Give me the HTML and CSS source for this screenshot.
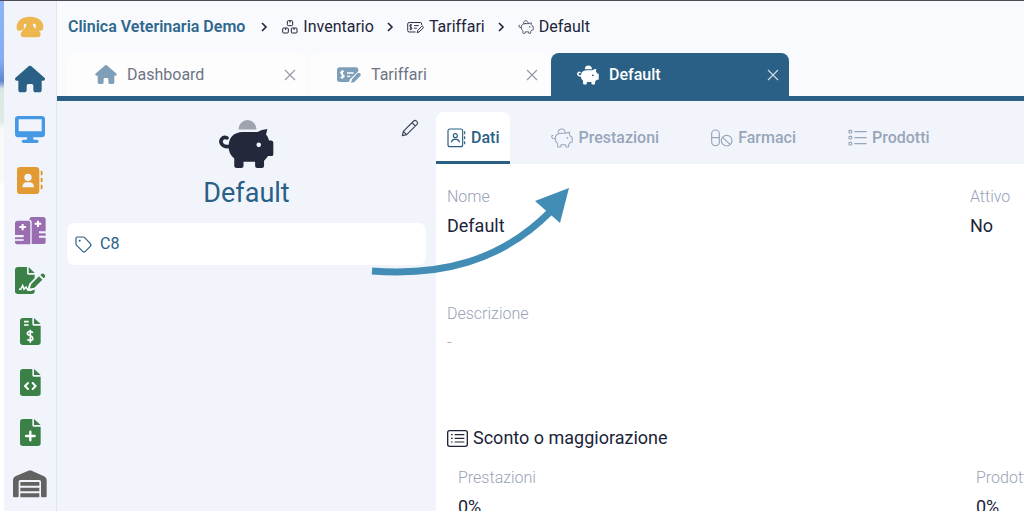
FILE: index.html
```html
<!DOCTYPE html>
<html lang="it">
<head>
<meta charset="utf-8">
<title>Clinica Veterinaria Demo</title>
<link rel="stylesheet" href="styles.css">
</head>
<body>
<svg class="sprite" aria-hidden="true">
  <symbol id="house" viewBox="0 0 576 512"><path fill="currentColor" d="M575.8 255.5c0 18-15 32.1-32 32.1h-32l.7 160.2c0 2.700-.2 5.400-.5 8.100V472c0 22.100-17.900 40-40 40H392c-22.100 0-40-17.900-40-40V384c0-17.700-14.300-32-32-32H256c-17.700 0-32 14.300-32 32v88c0 22.100-17.900 40-40 40H104c-22.100 0-40-17.900-40-40V287.600H32c-18 0-32-14-32-32.100 0-9 3-17 10-24L266.400 8c7-7 15-8 22-8s15 2 21 7L564.800 231.500c8 7 12 15 11 24z"/></symbol>
  <symbol id="pig" viewBox="88 40 166 149">
    <path d="M147 71a27 29 0 0 1 54 0z" fill="currentColor" class="coin"/>
    <path d="M112 96C99 90 90 104 96 114Q102 124 120 122" fill="none" stroke="currentColor" stroke-width="11" stroke-linecap="round"/>
    <path fill="currentColor" fill-rule="evenodd" d="M160 78H204Q216 70 234 69L230 86Q236 92 239 104H246Q252 105 252 111V146Q252 151 246 151H236Q230 160 224 165V181Q224 187 217 187H203Q197 187 197 181V168H162V181Q162 187 155 187H141Q134 187 134 181V158Q117 146 117 122Q117 80 160 78ZM208 110a7 7 0 1 0 0 14a7 7 0 1 0 0-14Z"/>
  </symbol>
  <symbol id="pig-line" viewBox="84 38 172 155">
    <g fill="none" stroke="currentColor" stroke-width="8" stroke-linejoin="round" stroke-linecap="round">
      <path d="M140 74C142 36 192 36 196 74M100 96C86 94 86 112 98 118Q104 122 117 121"/>
      <path d="M160 78H202Q214 70 230 70L227 88Q235 95 238 106H244Q250 107 250 112V144Q250 149 244 149H236Q230 160 222 165V181Q222 186 215 186H205Q199 186 199 181V169H162V181Q162 186 155 186H143Q136 186 136 181V158Q117 146 117 122Q117 80 160 78Z"/>
    </g><circle cx="212" cy="115" r="7" fill="currentColor"/>
  </symbol>
  <symbol id="check" viewBox="0 0 72 54">
    <path fill="currentColor" d="M8 4H56Q64 4 64 12V16L39 40L36 48H8Q0 48 0 40V12Q0 4 8 4ZM61 22Q65 18 69 22T70 30L52 48L42 51L45 40Z"/>
    <g fill="none" stroke="#fff" stroke-width="4"><path d="M21 17Q17 14 13 17T14 24L19 27Q23 31 19 34T11 33M16 12V38M30 21H50M30 31H40"/></g>
  </symbol>
  <symbol id="check-line" viewBox="0 0 72 54">
    <g fill="none" stroke="currentColor" stroke-width="4" stroke-linejoin="round"><path d="M36 46H9Q3 46 3 40V12Q3 6 9 6H56Q62 6 62 12V16M62 22Q66 19 68 23T68 30L51 46L43 49L46 39ZM21 17Q17 14 13 17T14 24L19 27Q23 31 19 34T11 33M16 12V38M30 19H50M30 30H42"/></g>
  </symbol>
  <symbol id="boxes" viewBox="0 0 48 42">
    <g fill="none" stroke="currentColor" stroke-width="3"><rect x="16" y="2" width="16" height="15" rx="3"/><rect x="2" y="24" width="17" height="15" rx="3"/><rect x="28" y="24" width="17" height="15" rx="3"/><path d="M24 2V8M11 24V30M36 24V30"/></g>
  </symbol>
  <symbol id="chevron" viewBox="0 0 8 10"><path d="M2 1L6 5L2 9" fill="none" stroke="currentColor" stroke-width="1.600"/></symbol>
  <symbol id="cross" viewBox="0 0 12 12"><path d="M1 1L11 11M11 1L1 11" fill="none" stroke="currentColor" stroke-width="1.100"/></symbol>
</svg>

<div class="app">
  <div class="backdrop"></div>
  <nav class="sidebar" aria-label="Menu">
    <button class="side phone" aria-label="Telefono"><svg width="28" height="22" viewBox="50 46 84 66"><path fill="currentColor" d="M52 78C52 60 69 48 92 48S132 60 132 78C132 88 128 91 122 90L114 88Q108 86 109 79Q112 70 105 69H102Q99 71 102 77C106 86 124 88 124 101Q124 110 115 110H73Q64 110 64 101C64 92 77 86 80 77Q83 71 79 69H77Q72 70 74 79Q75 86 69 88L61 90Q52 92 52 82Z"/></svg></button>
    <div class="side-list">
      <button class="side home" aria-label="Home"><svg width="30" height="28"><use href="#house"/></svg></button>
      <button class="side screen" aria-label="Schermo"><svg width="30" height="27" viewBox="0 0 90 81"><path fill="currentColor" fill-rule="evenodd" d="M10 0H80Q90 0 90 10V54Q90 64 80 64H54L56 71H66Q71 72 71 76T66 81H25Q20 80 20 76T25 71H35L37 64H10Q0 64 0 54V10Q0 0 10 0ZM11 10V46H80V10Z"/></svg></button>
      <button class="side contacts" aria-label="Contatti"><svg width="26" height="27" viewBox="0 0 78 81"><path fill="currentColor" fill-rule="evenodd" d="M10 0H57Q67 0 67 10V71Q67 81 57 81H10Q0 81 0 71V10Q0 0 10 0ZM33 20a11 11 0 1 0 0 22a11 11 0 1 0 0-22ZM16 61H51Q50 46 38 46H29Q17 46 16 61ZM71 11H74Q77 11 77 14V22Q77 25 74 25H71ZM71 32H74Q77 32 77 35V43Q77 46 74 46H71ZM71 53H74Q77 53 77 56V64Q77 67 74 67H71Z"/></svg></button>
      <button class="side records" aria-label="Cartelle"><svg width="31" height="28" viewBox="0 0 93 84"><path fill="currentColor" d="M8 11H40Q46 11 46 18V82H8Q0 82 0 74V61H26V54H0V19Q0 11 8 11ZM43 8Q43 0 51 0H84Q92 0 92 8V43H72V49H92V56H72V62H92V74Q92 81 84 81H50V16Q50 8 43 8Z"/><path d="M23 21V40M13 30H33M69 11V30M59 20H79" stroke="#fff" stroke-width="6"/><path d="M0 69H26" stroke="#f1f5fb" stroke-width="5"/></svg></button>
      <button class="side docs" aria-label="Consensi"><svg width="31" height="28" viewBox="0 0 93 84"><path fill="currentColor" d="M9 0H36V19Q36 23 40 23H59V33L42 51L36 72H48L59 67V73Q59 81 51 81H9Q0 81 0 73V9Q0 0 9 0ZM41 0L59 18H41ZM72 28L82 38L58 62L44 66L49 51ZM76 24L80 20Q84 18 88 22T90 30L86 34Z"/><path d="M12 67H17L23 55L27 67L33 60L37 67H57" fill="none" stroke="#fff" stroke-width="4.500"/></svg></button>
      <button class="side docs" aria-label="Fatture"><svg width="21" height="28" viewBox="0 0 63 84"><path fill="currentColor" d="M9 0H37V19Q37 23 41 23H62V73Q62 81 53 81H9Q0 81 0 73V9Q0 0 9 0ZM42 0L62 18H42Z"/><path d="M12 11H26M12 21H26M39 44Q33 39 26 41Q19 45 24 50L36 56Q41 62 36 66Q29 70 22 64M31 35V74" fill="none" stroke="#fff" stroke-width="5"/></svg></button>
      <button class="side docs" aria-label="Codici"><svg width="21" height="28" viewBox="0 0 63 84"><path fill="currentColor" d="M9 0H37V19Q37 23 41 23H62V73Q62 81 53 81H9Q0 81 0 73V9Q0 0 9 0ZM42 0L62 18H42Z"/><path d="M24 42L15 51L24 60M38 42L47 51L38 60" fill="none" stroke="#fff" stroke-width="6" stroke-linecap="round" stroke-linejoin="round"/></svg></button>
      <button class="side docs" aria-label="Nuovo"><svg width="21" height="28" viewBox="0 0 63 84"><path fill="currentColor" d="M9 0H37V19Q37 23 41 23H62V73Q62 81 53 81H9Q0 81 0 73V9Q0 0 9 0ZM42 0L62 18H42Z"/><path d="M31 38V64M18 51H44" stroke="#fff" stroke-width="7" stroke-linecap="round"/></svg></button>
      <button class="side depot" aria-label="Magazzino"><svg width="34" height="28" viewBox="0 0 102 84"><path fill="currentColor" d="M0 79V30Q0 22 7 19L46 2Q51 0 56 2L93 19Q101 22 101 30V79Q101 82 98 82H87Q84 82 84 79V35Q84 30 79 30H22Q17 30 17 35V79Q17 82 14 82H3Q0 82 0 79ZM22 36H79V47H22ZM22 53H79V64H22ZM22 70H79V82H22Z"/></svg></button>
    </div>
  </nav>

  <main class="main">
    <nav class="crumbs" aria-label="Percorso">
      <a class="clinic" href="#">Clinica Veterinaria Demo</a>
      <svg class="sep" width="8" height="10"><use href="#chevron"/></svg>
      <a href="#"><svg width="16" height="14"><use href="#boxes"/></svg>Inventario</a>
      <svg class="sep" width="8" height="10"><use href="#chevron"/></svg>
      <a href="#"><svg width="17" height="13"><use href="#check-line"/></svg>Tariffari</a>
      <svg class="sep" width="8" height="10"><use href="#chevron"/></svg>
      <a href="#"><svg width="16" height="14"><use href="#pig-line"/></svg>Default</a>
    </nav>

    <div class="tabs">
      <div class="tab"><a href="#"><svg width="22" height="19"><use href="#house"/></svg>Dashboard</a><button aria-label="Chiudi Dashboard"><svg width="12" height="12"><use href="#cross"/></svg></button></div>
      <div class="tab"><a href="#"><svg width="24" height="18"><use href="#check"/></svg>Tariffari</a><button aria-label="Chiudi Tariffari"><svg width="12" height="12"><use href="#cross"/></svg></button></div>
      <div class="tab current"><a href="#"><svg width="22" height="20"><use href="#pig"/></svg>Default</a><button aria-label="Chiudi Default"><svg width="12" height="12"><use href="#cross"/></svg></button></div>
    </div>

    <div class="page">
      <aside class="summary">
        <button class="edit" aria-label="Modifica"><svg width="18" height="18" viewBox="0 0 54 54"><path d="M4 50L7 37L38 6Q42 2 47 7T48 16L17 47ZM33 11L43 21M7 37L17 47" fill="none" stroke="currentColor" stroke-width="3.500" stroke-linejoin="round"/></svg></button>
        <svg class="hero" width="55" height="50"><use href="#pig"/></svg>
        <h1>Default</h1>
        <div class="tag"><svg width="17" height="17" viewBox="0 0 51 51"><path d="M7 3H24Q27 3 29 5L46 23Q50 27 46 31L31 46Q27 50 23 46L5 28Q3 26 3 23V7Q3 3 7 3Z" fill="none" stroke="currentColor" stroke-width="3.500"/><circle cx="14" cy="14" r="3" fill="currentColor"/></svg>C8</div>
      </aside>

      <section class="detail">
        <div class="subtabs" role="tablist">
          <button class="subtab active" role="tab" aria-selected="true"><svg width="19" height="20" viewBox="0 0 57 60"><g fill="none" stroke="currentColor" stroke-width="3.500"><rect x="3" y="3" width="44" height="53" rx="6"/><circle cx="25" cy="23" r="6"/><path d="M13 43Q15 34 22 34H28Q35 34 38 43M53 10V19M53 25V34M53 40V49"/></g></svg>Dati</button>
          <button class="subtab" role="tab"><svg width="22" height="20"><use href="#pig-line"/></svg>Prestazioni</button>
          <button class="subtab" role="tab"><svg width="22" height="18" viewBox="0 0 66 54"><g fill="none" stroke="currentColor" stroke-width="3.500"><rect x="2" y="3" width="23" height="47" rx="11"/><path d="M2 26H25M35 25L57 46"/><circle cx="47" cy="35" r="16"/></g></svg>Farmaci</button>
          <button class="subtab" role="tab"><svg width="19" height="18" viewBox="0 0 57 54"><g fill="none" stroke="currentColor" stroke-width="3.500"><rect x="3" y="4" width="8" height="8" rx="2"/><rect x="3" y="22" width="8" height="8" rx="2"/><rect x="3" y="40" width="8" height="8" rx="2"/><path d="M19 8H56M19 26H56M19 44H56"/></g></svg>Prodotti</button>
        </div>
        <div class="body">
          <dl class="fields">
            <div><dt>Nome</dt><dd>Default</dd></div>
            <div><dt>Attivo</dt><dd>No</dd></div>
            <div><dt>Descrizione</dt><dd class="empty">-</dd></div>
          </dl>
          <h2><svg width="21" height="17" viewBox="0 0 63 51"><g fill="none" stroke="currentColor" stroke-width="4"><rect x="2" y="2" width="59" height="47" rx="6"/><path d="M12 14H17M12 25H17M12 36H17M23 14H52M23 25H52M23 36H52" stroke-width="3.500"/></g></svg>Sconto o maggiorazione</h2>
          <dl class="fields rates">
            <div><dt>Prestazioni</dt><dd>0%</dd></div>
            <div><dt>Prodotti</dt><dd>0%</dd></div>
          </dl>
        </div>
      </section>
      <svg class="arrow" width="200" height="92" viewBox="371 186 200 92" aria-hidden="true"><path d="M372 271C440 276 500 262 550 212" fill="none" stroke="#428db5" stroke-width="7"/><path d="M569 188L535 201L560 223Z" fill="#428db5"/></svg>
    </div>
  </main>
</div>
</body>
</html>
```
FILE: styles.css
```css
* { box-sizing: border-box; }
body { margin: 0; overflow: hidden; font: 16px/20px Roboto, "Liberation Sans", sans-serif; color: #20243a; background: #fff; }
a { color: inherit; text-decoration: none; }
button { border: 0; padding: 0; background: none; color: inherit; font: inherit; }
svg { flex: none; display: block; }
dl, dd, h1, h2 { margin: 0; }
.sprite { position: absolute; width: 0; height: 0; }

.app { display: grid; grid-template-columns: 4px 53px minmax(0, 1fr); grid-template-rows: minmax(0, 1fr); height: 100vh; border-top: 1px solid #4b4c55; }
.backdrop { background: linear-gradient(#8db5f7 0, #86aaf0 60px, #5f86cc 80px, #dbe8e3 88px, #dfeae7 120px, #f7faf8 128px, #f7faf8 180px, #fff 184px); }

.sidebar { display: flex; flex-direction: column; min-height: 0; padding-bottom: 2px; background: #f1f5fb; border-right: 1px solid #e0e5ef; }
.side { display: grid; place-items: center; min-height: 0; }
.side-list { flex: 1; min-height: 0; display: grid; grid-template-rows: repeat(9, minmax(0, 1fr)); margin-top: 1px; }
.phone { flex: none; height: 52px; color: #edb64e; }
.home { color: #2a6086; }
.screen { color: #4699e5; }
.contacts { color: #e49a33; }
.records { color: #9a6db0; }
.docs { color: #3b8147; }
.depot { color: #626262; }

.main { display: flex; flex-direction: column; min-width: 0; background: #f9fafd; }
.crumbs { display: flex; align-items: center; height: 52px; padding-left: 11px; white-space: nowrap; }
.crumbs a { display: flex; align-items: center; gap: 5px; }
.crumbs .clinic { color: #2e678d; font-weight: 600; }
.sep { margin: 0 14px 0 15px; }
.sep ~ .sep { margin: 0 13px 0 12px; }

.tabs { display: flex; gap: 2px; height: 48px; padding-left: 10px; border-bottom: 5px solid #2a6086; }
.tab { display: flex; align-items: center; justify-content: space-between; width: 240px; padding: 0 11px 0 28px; border-radius: 8px 8px 0 0; background: #fdfdfe; color: #6d7484; }
.tab a { display: flex; align-items: center; gap: 10px; }
.tab a svg { color: #7f9fb8; }
.tab button { color: #9297a5; }
.tab.current { width: 238px; padding: 0 10px 0 26px; background: #2a6086; color: #fff; font-weight: 500; }
.tab.current a svg { color: #fff; }
.tab.current button { color: #d3dfe8; }

.page { position: relative; flex: 1; min-height: 0; display: grid; grid-template-columns: 379px minmax(0, 1fr); }
.summary { position: relative; display: flex; flex-direction: column; align-items: center; padding: 18px 10px; background: #f1f5fb; }
.edit { position: absolute; top: 18px; right: 17px; color: #41455a; }
.coin { opacity: var(--coin, 1); }
.hero { --coin: .4; color: #24283b; }
.summary h1 { margin: 8px 0 14px; font-size: 27px; line-height: 32px; font-weight: 400; color: #2a6086; }
.tag { display: flex; align-items: center; gap: 8px; width: 100%; height: 42px; padding-left: 8px; border-radius: 8px; background: #fff; color: #2a6086; }

.detail { display: flex; flex-direction: column; min-width: 0; overflow: hidden; background: #fff; }
.subtabs { display: flex; flex: none; gap: 30px; height: 63px; padding-top: 11px; background: #f1f5fb; }
.subtab { display: flex; align-items: center; gap: 5px; padding: 2px 11px 0; border-bottom: 3px solid transparent; color: #98a5ba; font-weight: 500; }
.subtab.active { background: #fff; border-color: #2a6086; border-radius: 8px 8px 0 0; color: #2a6086; }
.body { flex: 1; min-height: 0; padding: 23px 0 0 11px; }
.fields { display: grid; grid-template-columns: minmax(0, 1fr) 54px; row-gap: 67px; }
.fields dt { color: #98a2b8; font-weight: 300; white-space: nowrap; }
.fields dd { margin-top: 8px; font-size: 18px; line-height: 22px; }
.fields .empty { color: #98a2b8; font-size: 16px; font-weight: 300; }
.body h2 { display: flex; align-items: center; gap: 5px; margin: 72px 0 18px; font-size: 18px; line-height: 24px; font-weight: 400; }
.rates { grid-template-columns: minmax(0, 1fr) 48px; padding-left: 11px; }

.arrow { position: absolute; left: 314px; top: 85px; }
```
